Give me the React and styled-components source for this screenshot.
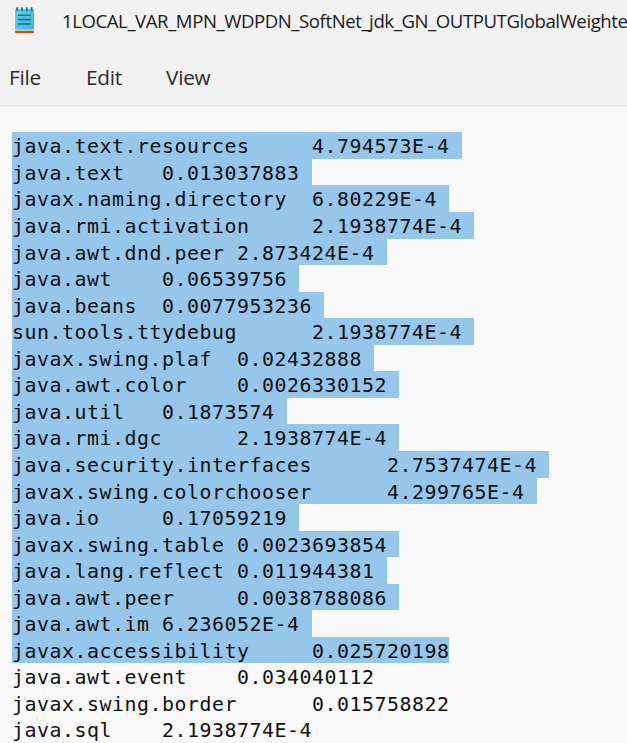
import React from "react";
import styled, { createGlobalStyle } from "styled-components";

const GlobalStyle = createGlobalStyle`
  body { margin: 0; background: #f9f9f9; }
`;

const Window = styled.div`
  width: 627px;
  height: 743px;
  display: flex;
  flex-direction: column;
  overflow: hidden;
  background: #f9f9f9;
  font-family: "Open Sans", "Noto Sans", sans-serif;
`;

const Header = styled.header`
  flex: none;
  box-sizing: border-box;
  height: 107px;
  background: #f2f2f2;
  border-bottom: 2px solid #e8e8e8;
`;

const TitleBar = styled.div`
  display: flex;
  align-items: center;
  height: 42px;
  padding-left: 14px;
`;

const AppIcon = styled.svg`
  flex: none;
  margin-bottom: 2px;
`;

const Title = styled.span`
  margin-left: 27px;
  font-size: 18.6px;
  line-height: 26px;
  letter-spacing: -0.43px;
  white-space: nowrap;
  color: #1b1b1b;
`;

const MenuBar = styled.nav`
  display: flex;
  gap: 44px;
  padding: 21px 0 0 9px;
`;

const MenuItem = styled.span`
  width: ${(p) => p.$width}px;
  font-size: 20.8px;
  line-height: 28px;
  letter-spacing: -0.25px;
  white-space: nowrap;
  color: #2b2b2b;
`;

const Editor = styled.main`
  display: grid;
  grid-auto-rows: 26.55px;
  padding: 25.4px 0 0 12px;
`;

const Line = styled.div`
  display: flex;
  font-family: "DejaVu Sans Mono", monospace;
  font-size: 19.9px;
  line-height: 29px;
  letter-spacing: 0.52px;
  tab-size: 75px;
  white-space: pre;
  color: #111;
`;

const LineText = styled.span`
  height: 100%;
  padding-right: ${(p) => (p.$newline ? "12.5px" : "0")};
  background: ${(p) => (p.$selected ? "#97c6eb" : "transparent")};
`;

const NotepadIcon = () => (
  <AppIcon width="21" height="27" viewBox="0 0 21 27">
    <defs>
      <linearGradient id="paper" x1="0" y1="0" x2="1" y2="1">
        <stop offset="0" stopColor="#65d3ed" />
        <stop offset="1" stopColor="#3db3d8" />
      </linearGradient>
    </defs>
    <rect x="1" y="22" width="19" height="4" rx="0.8" fill="#e9ddd3" />
    <rect x="1" y="23.8" width="19" height="2.4" rx="0.8" fill="#b35a18" />
    <rect x="1" y="2" width="19" height="20.6" rx="1" fill="url(#paper)" />
    <path d="M3.2 1v2.5M8 1v2.5M12.8 1v2.5M17.6 1v2.5" stroke="#187d9f" strokeWidth="2" strokeLinecap="round" />
    <path d="M4.5 8.2h12M4.5 12.6h12M4.5 17h12" stroke="#14799b" strokeWidth="1.6" strokeLinecap="round" />
  </AppIcon>
);

const SELECTED = 20;
const entries = [
  ["java.text.resources", "4.794573E-4"],
  ["java.text", "0.013037883"],
  ["javax.naming.directory", "6.80229E-4"],
  ["java.rmi.activation", "2.1938774E-4"],
  ["java.awt.dnd.peer", "2.873424E-4"],
  ["java.awt", "0.06539756"],
  ["java.beans", "0.0077953236"],
  ["sun.tools.ttydebug", "2.1938774E-4"],
  ["javax.swing.plaf", "0.02432888"],
  ["java.awt.color", "0.0026330152"],
  ["java.util", "0.1873574"],
  ["java.rmi.dgc", "2.1938774E-4"],
  ["java.security.interfaces", "2.7537474E-4"],
  ["javax.swing.colorchooser", "4.299765E-4"],
  ["java.io", "0.17059219"],
  ["javax.swing.table", "0.0023693854"],
  ["java.lang.reflect", "0.011944381"],
  ["java.awt.peer", "0.0038788086"],
  ["java.awt.im", "6.236052E-4"],
  ["javax.accessibility", "0.025720198"],
  ["java.awt.event", "0.034040112"],
  ["javax.swing.border", "0.015758822"],
  ["java.sql", "2.1938774E-4"],
];

export default function App() {
  return (
    <Window>
      <GlobalStyle />
      <Header>
        <TitleBar>
          <NotepadIcon />
          <Title>1LOCAL_VAR_MPN_WDPDN_SoftNet_jdk_GN_OUTPUTGlobalWeighte</Title>
        </TitleBar>
        <MenuBar>
          <MenuItem $width={33}>File</MenuItem>
          <MenuItem $width={36}>Edit</MenuItem>
          <MenuItem $width={46}>View</MenuItem>
        </MenuBar>
      </Header>
      <Editor>
        {entries.map(([name, value], i) => (
          <Line key={name}>
            <LineText $selected={i < SELECTED} $newline={i < SELECTED - 1}>
              {name + "\t" + value}
            </LineText>
          </Line>
        ))}
      </Editor>
    </Window>
  );
}
